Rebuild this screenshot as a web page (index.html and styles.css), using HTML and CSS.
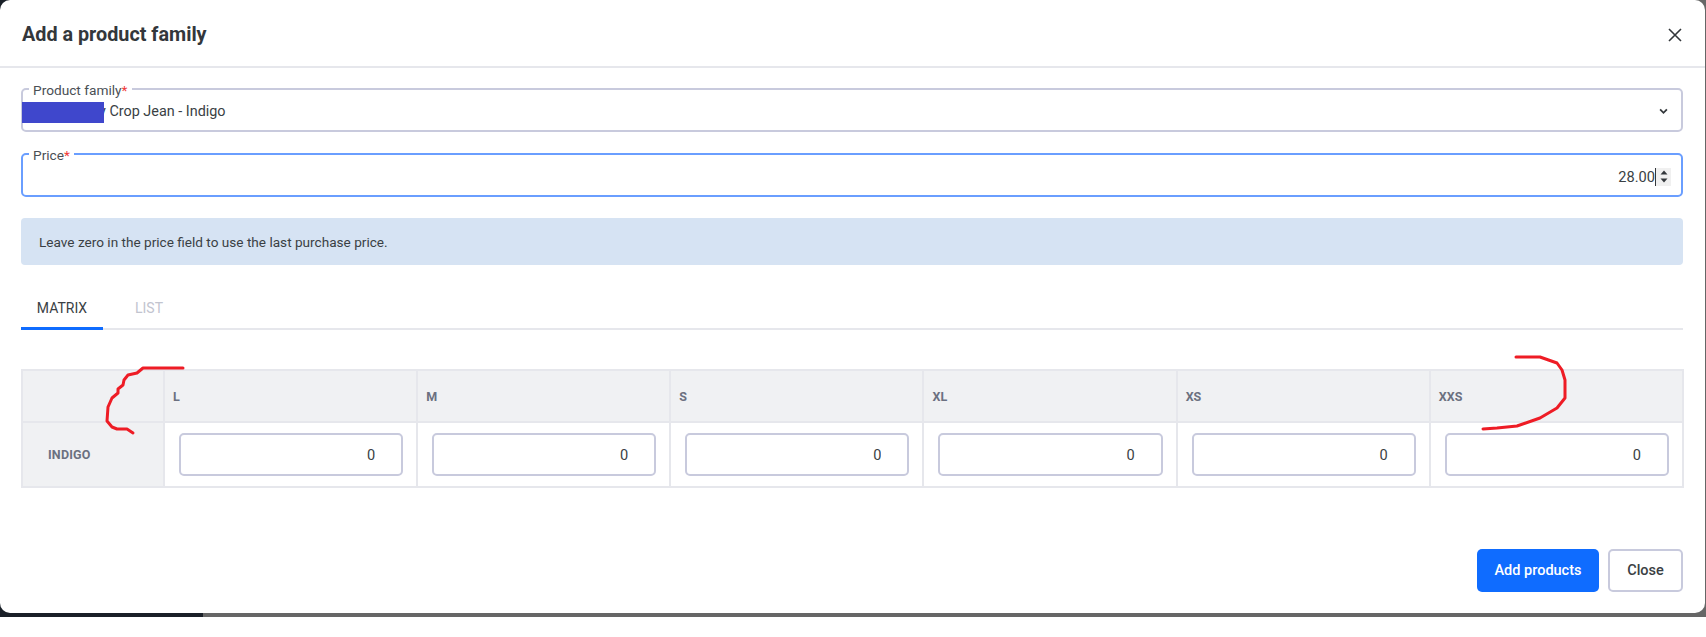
FILE: index.html
```html
<!DOCTYPE html>
<html>
<head>
    <title>Add a product family</title>
    <link rel="stylesheet" href="styles.css">
</head>
<body>
<div class="backdrop">
    <div class="modal">
        <div class="modal-header">
            <h2>Add a product family</h2>
            <svg class="close-icon" viewBox="0 0 14 14"><path d="M1 1L13 13M13 1L1 13"/></svg>
        </div>

        <div class="modal-body">
            <fieldset class="field">
                <legend>Product family<span class="req">*</span></legend>
                <div class="field-row">
                    <span class="field-value">y Crop Jean - Indigo</span>
                    <svg class="caret" viewBox="0 0 8 6"><path d="M1 1.2L4 4.2L7 1.2"/></svg>
                </div>
                <div class="redacted"></div>
            </fieldset>

            <fieldset class="field field-focus">
                <legend>Price<span class="req">*</span></legend>
                <div class="field-row price-row">
                    <span class="price-value">28.00</span>
                    <span class="text-cursor"></span>
                    <span class="spinner">
                        <svg viewBox="0 0 8 5"><path d="M4 0.5L7.5 4.5H0.5Z"/></svg>
                        <svg viewBox="0 0 8 5"><path d="M0.5 0.5H7.5L4 4.5Z"/></svg>
                    </span>
                </div>
            </fieldset>

            <div class="alert">Leave zero in the price field to use the last purchase price.</div>

            <div class="tabs">
                <div class="tab active">MATRIX</div>
                <div class="tab muted">LIST</div>
            </div>

            <table class="matrix">
                <thead>
                    <tr>
                        <th class="corner"></th>
                        <th>L</th>
                        <th>M</th>
                        <th>S</th>
                        <th>XL</th>
                        <th>XS</th>
                        <th>XXS</th>
                    </tr>
                </thead>
                <tbody>
                    <tr>
                        <th class="row-name">INDIGO</th>
                        <td><input type="text" value="0"></td>
                        <td><input type="text" value="0"></td>
                        <td><input type="text" value="0"></td>
                        <td><input type="text" value="0"></td>
                        <td><input type="text" value="0"></td>
                        <td><input type="text" value="0"></td>
                    </tr>
                </tbody>
            </table>

            <div class="actions">
                <button class="btn btn-primary">Add products</button>
                <button class="btn btn-outline">Close</button>
            </div>
        </div>
    </div>

    <!-- red pen marks on top of the screenshot -->
    <svg class="scribble" viewBox="0 0 1706 637">
        <polyline points="183,368 143,368 137,373 128,375 124,380 123,385 118,389 118,393 112,398 108,407 107,421 112,427 117,429 127,429 133,433"/>
        <polyline points="1516,357 1540,357 1557,363 1562,370 1565,380 1565,398 1557,408 1540,418 1517,426 1497,428 1483,429"/>
    </svg>
</div>
</body>
</html>
```

FILE: styles.css
```css
* {
    box-sizing: border-box;
}
html, body {
    margin: 0;
    padding: 0;
    height: 637px;
    overflow: hidden;
    background: white;
}
body {
    font-family: Roboto, "Liberation Sans", sans-serif;
    font-size: 14px;
    color: #3a3f44;
}
.backdrop {
    position: relative;
    height: 617px;
    background: linear-gradient(to right, #1a2028 203px, #666666 203px);
}
.modal {
    width: 1705px;
    height: 613px;
    background: white;
    border-radius: 10px;
    display: flex;
    flex-direction: column;
}
.modal-header {
    height: 68px;
    flex: none;
    padding: 0 23px 0 22px;
    border-bottom: 2px solid #e6e7ec;
    display: flex;
    align-items: center;
    justify-content: space-between;
}
.modal-header h2 {
    margin: 2px 0 0 0;
    font-size: 19.8px;
    font-weight: 700;
    color: #33373b;
}
.close-icon {
    width: 14px;
    height: 14px;
    margin-top: 3px;
}
.close-icon path {
    fill: none;
    stroke: #33373b;
    stroke-width: 1.6;
}
.modal-body {
    flex: 1;
    padding: 12px 22px 21px 21px;
    display: flex;
    flex-direction: column;
}
.field {
    position: relative;
    margin: 0 0 13px 0;
    padding: 0 6px;
    height: 52px;
    border: 2px solid #c8cadd;
    border-radius: 5px;
    min-width: 0;
}
.field legend {
    padding: 2px 4px 0 4px;
    font-size: 13.7px;
    line-height: 16px;
    color: #4a4f55;
}
.req {
    color: #f03a3a;
}
.field-focus {
    border-color: #6a9eff;
}
.field-row {
    display: flex;
    align-items: center;
    justify-content: space-between;
    height: 27px;
    padding: 0 5px 0 4px;
}
.field-value {
    padding-left: 66px;
    font-size: 14.4px;
}
.caret {
    width: 9px;
    height: 7px;
    margin-right: 2px;
}
.caret path {
    fill: none;
    stroke: #33373b;
    stroke-width: 1.6;
}
.redacted {
    position: absolute;
    left: -1px;
    top: 4px;
    width: 82px;
    height: 21px;
    background: #3f47cc;
}
.price-row {
    justify-content: flex-end;
    padding-right: 4px;
}
.price-value {
    font-size: 14.6px;
}
.text-cursor {
    width: 1px;
    height: 18px;
    background: #33373b;
}
.spinner {
    width: 15px;
    height: 18px;
    background: #f0f0f0;
    display: flex;
    flex-direction: column;
    align-items: center;
    justify-content: center;
    gap: 3px;
}
.spinner svg {
    width: 8px;
    height: 5px;
    fill: #33373b;
}
.alert {
    margin-top: 8px;
    height: 47px;
    flex: none;
    padding: 0 18px;
    display: flex;
    align-items: center;
    background: #d6e3f3;
    border-radius: 4px;
    font-size: 13.6px;
    color: #3a3f44;
}
.tabs {
    margin-top: 22px;
    height: 43px;
    flex: none;
    display: flex;
    border-bottom: 2px solid #e6e7ec;
}
.tab {
    width: 82px;
    padding-top: 13px;
    text-align: center;
    font-size: 14px;
    height: 43px;
}
.tab.active {
    border-bottom: 3px solid #0f6cff;
    color: #3a3f44;
}
.tab.muted {
    width: 60px;
    margin-left: 16px;
    color: #c2c4cf;
}
.matrix {
    margin-top: 39px;
    width: 1663px;
    height: 119px;
    flex: none;
    table-layout: fixed;
    border-collapse: collapse;
}
.matrix th, .matrix td {
    border: 2px solid #e6e7ec;
}
.matrix th {
    background: #f0f1f3;
    text-align: left;
    padding: 0 0 0 8px;
    font-size: 12.5px;
    font-weight: 700;
    color: #6b7080;
    height: 52px;
}
.matrix .corner {
    width: 142px;
}
.matrix .row-name {
    padding-left: 25px;
    letter-spacing: 0.2px;
}
.matrix td {
    padding: 0 13px 0 14px;
}
.matrix input {
    width: 100%;
    height: 43px;
    padding: 0 26px 0 0;
    border: 2px solid #c8cadd;
    border-radius: 5px;
    text-align: right;
    font-family: inherit;
    font-size: 14.6px;
    color: #3a3f44;
    outline: none;
}
.actions {
    margin-top: auto;
    display: flex;
    justify-content: flex-end;
    gap: 9px;
}
.btn {
    height: 43px;
    border-radius: 5px;
    font-family: inherit;
    font-size: 14.5px;
    font-weight: 500;
}
.btn-primary {
    width: 122px;
    background: #0f6cff;
    border: none;
    color: white;
}
.btn-outline {
    width: 75px;
    background: white;
    border: 2px solid #c8cadd;
    color: #3a3f44;
}
.scribble {
    position: absolute;
    left: 0;
    top: 0;
    width: 1706px;
    height: 637px;
    pointer-events: none;
}
.scribble polyline {
    fill: none;
    stroke: #ee1c25;
    stroke-width: 3;
    stroke-linejoin: round;
    stroke-linecap: round;
}
```
